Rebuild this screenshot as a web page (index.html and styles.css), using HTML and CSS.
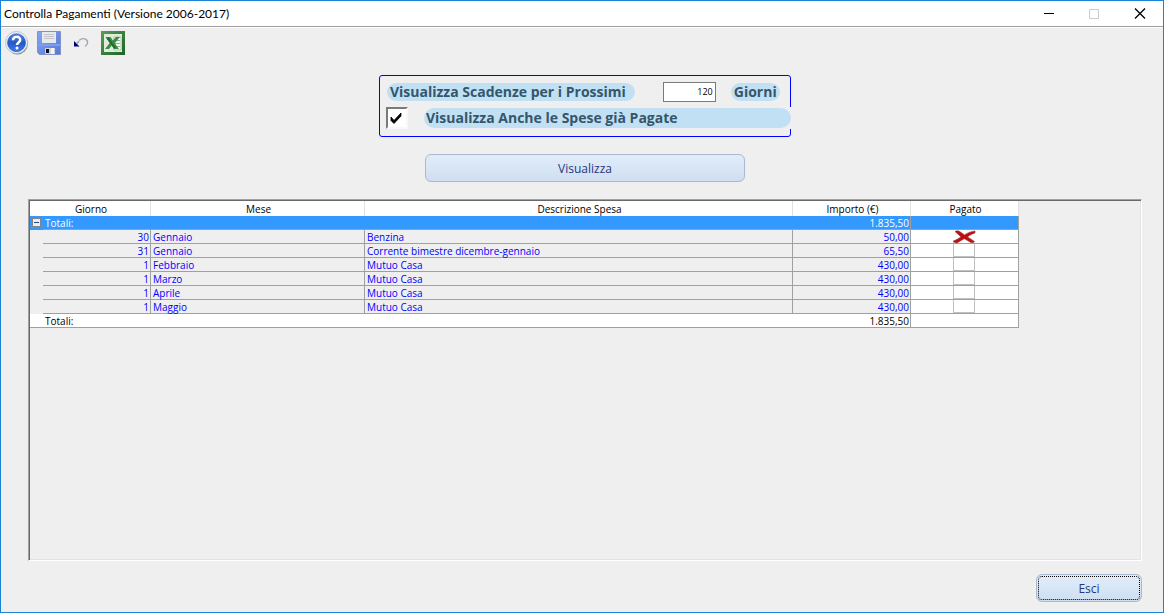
FILE: index.html
```html
<!DOCTYPE html>
<html lang="it">
<head>
<meta charset="utf-8">
<title>Controlla Pagamenti (Versione 2006-2017)</title>
<link rel="stylesheet" href="styles.css">
</head>
<body>
<div class="window">
  <header class="titlebar">
    <h1 class="title">Controlla Pagamenti (Versione 2006-2017)</h1>
    <div class="controls">
      <button class="control" type="button" aria-label="Riduci a icona"><svg width="12" height="12" viewBox="0 0 12 12"><path d="M2 5.500h10" stroke="#000"/></svg></button>
      <button class="control" type="button" aria-label="Ingrandisci" disabled><svg width="12" height="12" viewBox="0 0 12 12"><path d="M1.500 1.500h9v9h-9z" fill="none" stroke="#ccc"/></svg></button>
      <button class="control" type="button" aria-label="Chiudi"><svg width="12" height="12" viewBox="0 0 12 12"><path d="M1 .5l10 10M11 .5L1 10.500" stroke="#000" stroke-width="1.300"/></svg></button>
    </div>
  </header>

  <nav class="toolbar" aria-label="Strumenti">
    <button class="tool" type="button" aria-label="Aiuto">
      <svg width="24" height="24" viewBox="0 0 24 24">
        <defs><linearGradient id="helpFill" x1="0" y1="0" x2="0" y2="1"><stop offset="0" stop-color="#5b86e0"/><stop offset=".5" stop-color="#2458c8"/><stop offset="1" stop-color="#3f7be8"/></linearGradient></defs>
        <circle cx="12.300" cy="12.800" r="10.600" fill="#777d89"/>
        <circle cx="11.500" cy="11.500" r="11" fill="#eef2fa" stroke="#a9b3c8" stroke-width=".7"/>
        <circle cx="11.500" cy="11.700" r="9" fill="url(#helpFill)" stroke="#174bb5" stroke-width=".6"/>
        <path d="M8 9.300c0-4.600 7.400-4.400 7.200-.4-.1 2.500-3.200 2.600-3.200 5" fill="none" stroke="#fff" stroke-width="2.500"/>
        <circle cx="12" cy="17" r="1.500" fill="#fff"/>
      </svg>
    </button>
    <button class="tool" type="button" aria-label="Salva">
      <svg width="24" height="24" viewBox="0 0 24 24">
        <defs><linearGradient id="diskFill" x1="0" y1="0" x2="1" y2="1"><stop offset="0" stop-color="#86a6f0"/><stop offset="1" stop-color="#5577da"/></linearGradient></defs>
        <path d="M.5.5h23v23H2.500l-2-2z" fill="url(#diskFill)" stroke="#7f93c9"/>
        <path d="M5 1h14v11H5z" fill="#e7eaec"/>
        <path d="M7 3.500h10M7 5.500h10M7 7.500h10" stroke="#c2c6c8"/>
        <path d="M1 13h22v2H1z" fill="#7d9df0"/>
        <path d="M8 17h10v6H8z" fill="#cfd4da"/>
        <path d="M9 18h3v4H9z" fill="#111"/>
        <path d="M14 17h3v6h-3z" fill="#f4f4f4"/>
      </svg>
    </button>
    <button class="tool" type="button" aria-label="Annulla">
      <svg width="24" height="24" viewBox="0 0 24 24">
        <path d="M10 9.500c4-3.500 9-1.500 8.500 2.500-.2 1.500-1 2.500-2.500 3.500" fill="none" stroke="#a3a6b8" stroke-width="1.400"/>
        <path d="M5 10v5.500h5.500z" fill="#000072"/>
        <path d="M7.500 12.500l2.500-2" stroke="#8d90ac" stroke-width="1.400"/>
      </svg>
    </button>
    <button class="tool" type="button" aria-label="Esporta in Excel">
      <svg width="24" height="24" viewBox="0 0 24 24">
        <defs><linearGradient id="sheetEdge" x1="0" y1="0" x2="1" y2="1"><stop offset="0" stop-color="#5c9c58"/><stop offset="1" stop-color="#1c6425"/></linearGradient></defs>
        <path d="M0 0h24v24H0z" fill="url(#sheetEdge)"/>
        <path d="M3 3h18v18H3z" fill="#dfebdc"/>
        <path d="M13 6h7v13h-7z" fill="#f7fbf6" stroke="#a9c7a7"/>
        <path d="M14 9.500h5M14 12.500h5M14 15.500h5" stroke="#8cb48b"/>
        <path d="M4.500 6h5l2.300 3.400L15 6h4l-5.200 6.200L18 18h-5l-2.300-3.400L8 18H4l4.700-6z" fill="#3c8a46"/>
        <path d="M6.500 7l7.500 10" stroke="#1f6a2b" stroke-width="2"/>
      </svg>
    </button>
  </nav>

  <main class="content">
    <form class="filters">
      <div class="filter-box">
        <div class="filter-row">
          <label class="pill pill-first" for="days">Visualizza Scadenze per i Prossimi</label>
          <input class="days" id="days" type="text" value="120">
          <label class="pill" for="days">Giorni</label>
        </div>
        <div class="filter-row filter-row-paid">
          <span class="check"><input class="check-input" id="paid" type="checkbox" checked><svg class="check-mark" width="14" height="12" viewBox="0 0 14 12"><path d="M1 5l3 3.500L11 1v3l-7 7.500-3-3z" fill="#000" stroke="#000" stroke-width=".8"/></svg></span>
          <label class="pill pill-wide" for="paid">Visualizza Anche le Spese già Pagate</label>
        </div>
      </div>
      <button class="button button-show" type="button">Visualizza</button>
    </form>

    <section class="grid-frame" aria-label="Spese">
      <table class="grid">
        <colgroup><col class="c-tree"><col class="c-day"><col class="c-month"><col class="c-desc"><col class="c-amount"><col class="c-paid"></colgroup>
        <thead>
          <tr><th colspan="2">Giorno</th><th>Mese</th><th>Descrizione Spesa</th><th>Importo (€)</th><th>Pagato</th></tr>
        </thead>
        <tbody>
          <tr class="selected"><td class="tree"><button class="toggle" type="button" aria-label="Comprimi"></button></td><td colspan="3">Totali:</td><td class="num line">1.835,50</td><td class="line"></td></tr>
          <tr><td class="tree"></td><td class="num line">30</td><td class="line">Gennaio</td><td class="line">Benzina</td><td class="num line">50,00</td><td class="paid line"><input class="mark mark-on" type="checkbox" checked aria-label="Benzina, pagato"><svg class="cross" width="24" height="14" viewBox="0 0 24 14"><path d="M3 1.500c2-1 3.500-.8 5 .2l4.500 3.200c3-2 6-3.300 10.500-4v2c-3 1-5.500 2.300-7.500 4l7 4.500c-1 1.700-2.800 1.700-4.500.7L12.500 8.700c-3 1.500-5.300 2.800-7.500 4.300-1.500 0-3-.5-4-1.700 3-1.300 5.500-2.800 8-4.400z" fill="#c40c0c" stroke="#8d3a3a" stroke-width=".6"/></svg></td></tr>
          <tr><td class="tree"></td><td class="num line">31</td><td class="line">Gennaio</td><td class="line">Corrente bimestre dicembre-gennaio</td><td class="num line">65,50</td><td class="paid line"><input class="mark" type="checkbox" aria-label="Corrente, pagato"></td></tr>
          <tr><td class="tree"></td><td class="num line">1</td><td class="line">Febbraio</td><td class="line">Mutuo Casa</td><td class="num line">430,00</td><td class="paid line"><input class="mark" type="checkbox" aria-label="Mutuo febbraio, pagato"></td></tr>
          <tr><td class="tree"></td><td class="num line">1</td><td class="line">Marzo</td><td class="line">Mutuo Casa</td><td class="num line">430,00</td><td class="paid line"><input class="mark" type="checkbox" aria-label="Mutuo marzo, pagato"></td></tr>
          <tr><td class="tree"></td><td class="num line">1</td><td class="line">Aprile</td><td class="line">Mutuo Casa</td><td class="num line">430,00</td><td class="paid line"><input class="mark" type="checkbox" aria-label="Mutuo aprile, pagato"></td></tr>
          <tr><td class="tree"></td><td class="num line">1</td><td class="line">Maggio</td><td class="line">Mutuo Casa</td><td class="num line">430,00</td><td class="paid line"><input class="mark" type="checkbox" aria-label="Mutuo maggio, pagato"></td></tr>
        </tbody>
        <tfoot>
          <tr><td></td><td colspan="3">Totali:</td><td class="num line">1.835,50</td><td class="line"></td></tr>
        </tfoot>
      </table>
    </section>

    <footer class="actions"><button class="button button-exit" type="button">Esci</button></footer>
  </main>
</div>
</body>
</html>
```
FILE: styles.css
```css
* { box-sizing: border-box; }

body {
  margin: 0;
  background: #efefef;
  color: #000;
  font-family: "Open Sans", "Noto Sans", sans-serif;
}

button, input { font-family: inherit; }

.window {
  display: flex;
  flex-direction: column;
  min-height: 100vh;
  border: 1px solid #1883d7;
}

.titlebar {
  display: flex;
  align-items: center;
  justify-content: space-between;
  height: 26px;
  padding-left: 3px;
  background: #fff;
  border-bottom: 1px solid #a0a0a0;
}

.title {
  margin: 0;
  font-family: Lato, "Open Sans", sans-serif;
  font-size: 12px;
  font-weight: 400;
}

.controls { display: flex; }

.control {
  display: grid;
  place-items: center;
  width: 46px;
  height: 25px;
  padding: 0;
  background: none;
  border: 0;
}

.toolbar {
  display: flex;
  gap: 8px;
  padding: 3px 4px;
  border-top: 1px solid #fff;
}

.tool {
  width: 24px;
  height: 24px;
  padding: 0;
  background: none;
  border: 0;
}

.tool svg { display: block; }

.content {
  display: flex;
  flex: 1;
  flex-direction: column;
  padding: 17px 21px 10px 27px;
}

.filters {
  display: flex;
  flex-direction: column;
  align-items: center;
  gap: 17px;
}

.filter-box {
  display: flex;
  flex-direction: column;
  gap: 5px;
  width: 412px;
  height: 62px;
  padding: 6px 0 0 6px;
  border: 1px solid #00f;
  border-radius: 3px;
}

.filter-row {
  display: flex;
  align-items: center;
}

.filter-row-paid {
  margin-right: -1px;
  background: #efefef;
}

.pill {
  padding: 0 3px;
  border-radius: 11px;
  background: #c2e0f4;
  color: #34566b;
  font-size: 14px;
  font-weight: 700;
  line-height: 18px;
  white-space: nowrap;
}

.pill-first {
  margin-left: 1px;
  padding-right: 9px;
}

.pill-wide {
  flex: 1;
  margin-left: 16px;
  padding-left: 2px;
  line-height: 20px;
}

.days {
  width: 53px;
  height: 20px;
  margin: 0 15px 0 28px;
  padding: 0 2px 1px;
  border: 1px solid #7a7a7a;
  background: #fff;
  font-size: 9px;
  text-align: right;
}

.check {
  display: grid;
  place-items: center;
  width: 22px;
  height: 22px;
}

.check > * { grid-area: 1 / 1; }

.check-input {
  width: 22px;
  height: 22px;
  margin: 0;
  appearance: none;
  background: #fff;
  border: 2px solid;
  border-color: #7a7a7a #f8f8f8 #f8f8f8 #7a7a7a;
}

.check-mark {
  z-index: 1;
  pointer-events: none;
}

.button {
  height: 28px;
  padding: 0;
  border: 1px solid #a9b9d0;
  border-radius: 6px;
  background: linear-gradient(#e1ecfa, #cfdff0);
  color: #25377f;
  font-size: 12px;
}

.button-show { width: 320px; }

.button-exit {
  width: 106px;
  outline: 1px dotted #000;
  outline-offset: -3px;
}

.grid-frame {
  flex: 1;
  margin-top: 17px;
  padding: 1px;
  border: 1px solid;
  border-color: #a0a0a0 #fff #fff #a0a0a0;
  box-shadow: inset 1px 1px #696969, inset -1px -1px #e3e3e3;
}

.grid {
  table-layout: fixed;
  width: 989px;
  border-spacing: 0;
  font-size: 10px;
  line-height: 11px;
}

.c-tree { width: 13px; }
.c-day { width: 108px; }
.c-month { width: 214px; }
.c-desc { width: 428px; }
.c-amount { width: 118px; }
.c-paid { width: 108px; }

.grid th {
  height: 15px;
  padding: 2px 0 0 2px;
  border-right: 1px solid #e0e0e0;
  background: #fff;
  font-weight: 400;
}

.grid td {
  height: 14px;
  padding: 2px 2px 0;
  border-bottom: 1px solid #a0a0a0;
  white-space: nowrap;
}

.grid td.line { border-right: 1px solid #a0a0a0; }

.grid td.num {
  padding-right: 1px;
  text-align: right;
}

.grid td.tree { padding: 0; border-bottom: 0; }

.grid tbody { color: #00f; }

.grid .selected { background: #39f; color: #fff; }

.grid tfoot { background: #fff; }

.grid td.paid {
  position: relative;
  padding: 0 2px 0 0;
  background: #fff;
}

.toggle {
  display: block;
  width: 9px;
  height: 9px;
  margin: 0 0 2px 2px;
  padding: 0;
  border: 1px solid #848484;
  background: linear-gradient(#24479b, #24479b) center / 5px 1px no-repeat #eee;
}

.mark {
  display: block;
  width: 22px;
  height: 13px;
  margin: 0 auto;
  appearance: none;
  border: 1px solid #c0c0c0;
  border-top: 0;
}

.mark-on { border: 0; }

.cross {
  position: absolute;
  top: 0;
  left: calc(50% - 13px);
  pointer-events: none;
}

.actions {
  display: flex;
  justify-content: flex-end;
  margin-top: 13px;
}
```
